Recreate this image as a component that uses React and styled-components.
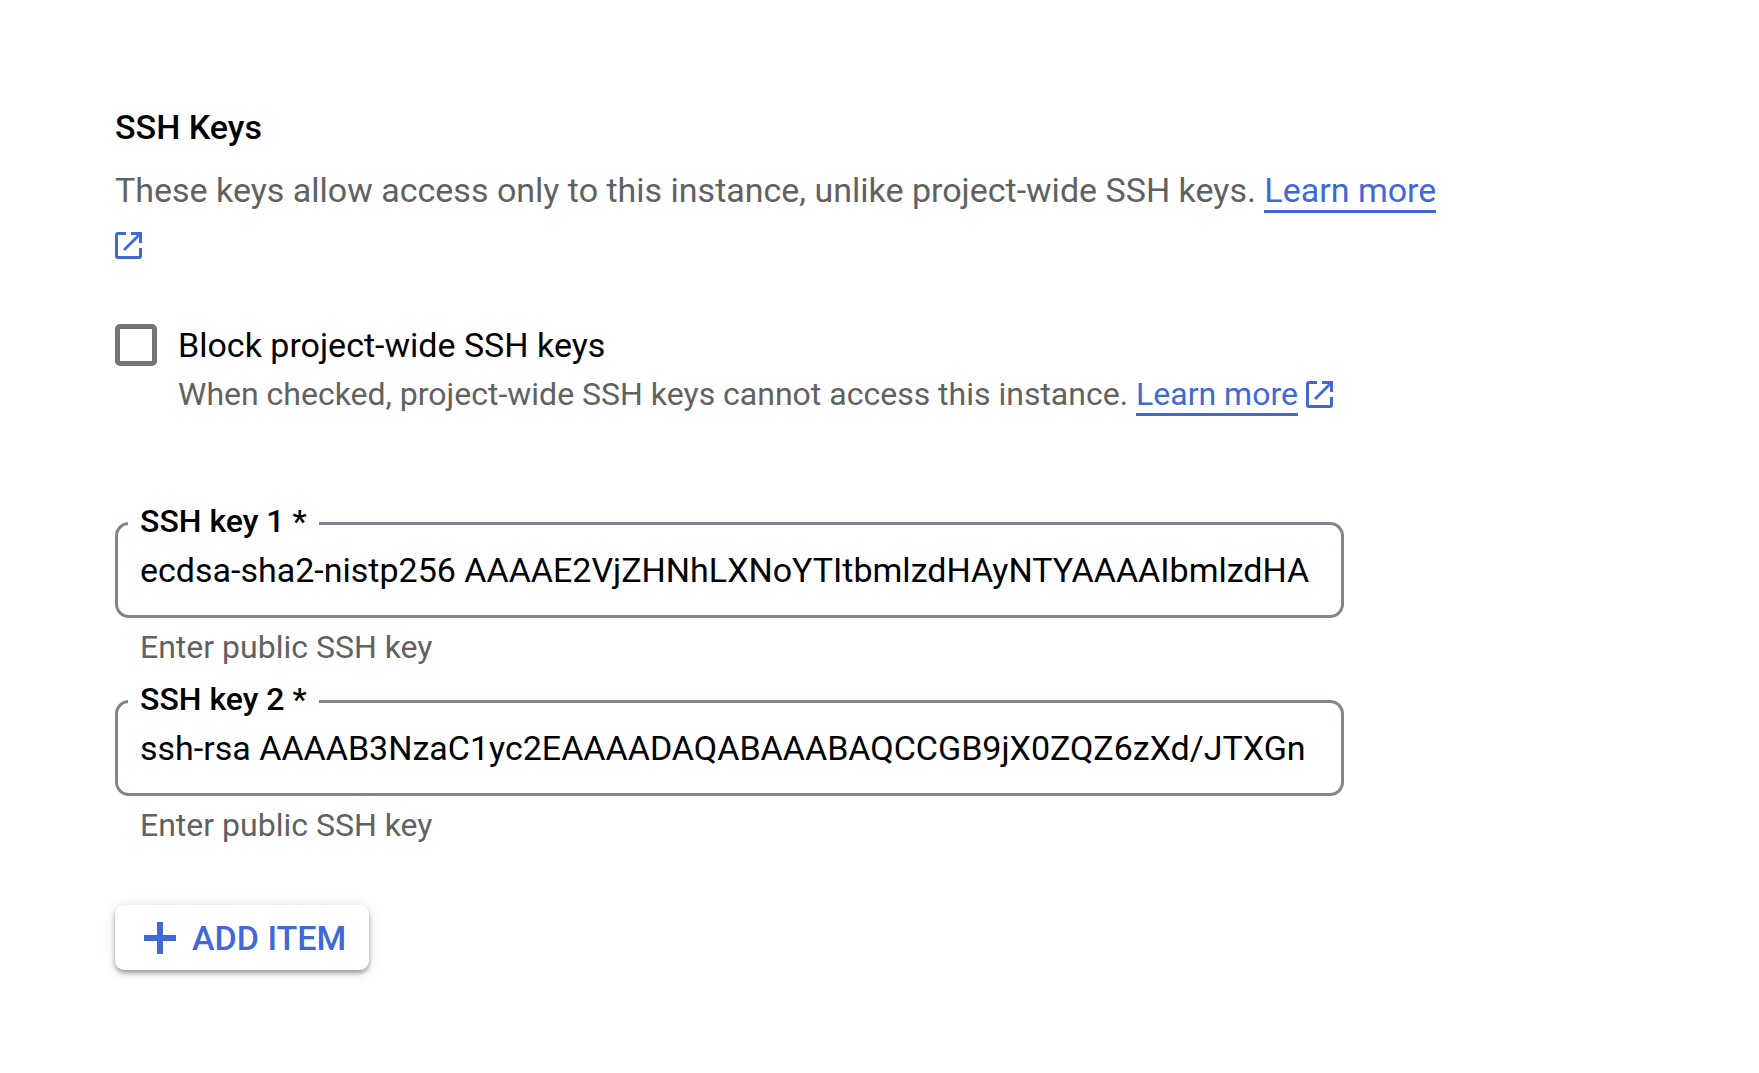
import React, { useState } from "react";
import styled, { createGlobalStyle } from "styled-components";

const GlobalStyle = createGlobalStyle`
  * { box-sizing: border-box; }
  body {
    margin: 0;
    background: #fff;
    color: #000;
    font-family: Roboto, "Liberation Sans", sans-serif;
  }
`;

const Page = styled.main`
  padding: 104px 64px 96px 115px;
`;

const Section = styled.section`
  max-width: 1356px;
`;

const Title = styled.h2`
  margin: 0;
  font-size: 34px;
  line-height: 46px;
  font-weight: 500;
`;

const Description = styled.p`
  margin: 13px 0 0;
  font-size: 34px;
  line-height: 54px;
  color: #616161;
`;

const Link = styled.a`
  color: #4068d6;
  text-decoration: none;
  border-bottom: 3px solid currentColor;
`;

const LinkIcon = styled.svg`
  width: 27px;
  height: 27px;
  fill: #4068d6;
  vertical-align: -3px;
`;

const CheckRow = styled.div`
  display: flex;
  gap: 21px;
  margin-top: 51px;
`;

const Checkbox = styled.input`
  appearance: none;
  flex: none;
  width: 42px;
  height: 42px;
  margin: 2px 0 0;
  border: 5px solid #757575;
  border-radius: 5px;
  background: #fff;

  &:checked {
    border-color: #4068d6;
    background: #4068d6;
  }
`;

const CheckText = styled.div`
  display: flex;
  flex-direction: column;
`;

const CheckLabel = styled.label`
  font-size: 34px;
  line-height: 46px;
`;

const Hint = styled.p`
  margin: 0;
  padding: ${(p) => (p.$inset ? "3px 0 0 25px" : "0")};
  font-size: 32px;
  line-height: 52px;
  color: #616161;
`;

const Fields = styled.div`
  display: flex;
  flex-direction: column;
  gap: 27px;
  max-width: 1229px;
  margin-top: 102px;
`;

const Outline = styled.div`
  position: relative;
  height: 96px;
  padding: 0 22px;
  border: 3px solid #80868b;
  border-radius: 14px;
`;

const FieldLabel = styled.label`
  position: absolute;
  left: 10px;
  top: -24px;
  padding: 0 12px;
  background: #fff;
  font-size: 32px;
  line-height: 40px;
  font-weight: 500;
`;

const FieldInput = styled.input`
  display: block;
  width: 100%;
  height: 90px;
  padding: 0;
  border: 0;
  outline: 0;
  background: transparent;
  color: #000;
  font-family: inherit;
  font-size: 34px;
`;

const AddButton = styled.button`
  display: inline-flex;
  align-items: center;
  gap: 16px;
  height: 65px;
  margin-top: 54px;
  padding: 0 23px 0 29px;
  border: 0;
  border-radius: 9px;
  background: #fff;
  box-shadow: 0 3px 4px rgba(0, 0, 0, 0.34), 0 2px 14px rgba(0, 0, 0, 0.12);
  color: #4068d6;
  font-family: inherit;
  font-size: 34px;
  font-weight: 500;
`;

const PlusIcon = styled.svg`
  width: 32px;
  height: 32px;
  fill: currentColor;
`;

const initialKeys = [
  "ecdsa-sha2-nistp256 AAAAE2VjZHNhLXNoYTItbmlzdHAyNTYAAAAIbmlzdHA",
  "ssh-rsa AAAAB3NzaC1yc2EAAAADAQABAAABAQCCGB9jX0ZQZ6zXd/JTXGn",
];

function ExternalIcon() {
  return (
    <LinkIcon viewBox="0 0 27 27" aria-hidden="true">
      <path d="M3 0H11V3H3V24H24V16H27V24a3 3 0 0 1-3 3H3a3 3 0 0 1-3-3V3a3 3 0 0 1 3-3Z" />
      <path d="M16 0H27V11H24V5L10 19L8 17L22 3H16Z" />
    </LinkIcon>
  );
}

function KeyField({ index, value, onChange }) {
  const id = `ssh-key-${index}`;
  return (
    <div>
      <Outline>
        <FieldLabel htmlFor={id}>SSH key {index} *</FieldLabel>
        <FieldInput
          id={id}
          type="text"
          required
          spellCheck={false}
          value={value}
          onChange={(e) => onChange(e.target.value)}
        />
      </Outline>
      <Hint $inset>Enter public SSH key</Hint>
    </div>
  );
}

export default function App() {
  const [keys, setKeys] = useState(initialKeys);
  const [blocked, setBlocked] = useState(false);
  const update = (i, v) => setKeys(keys.map((k, n) => (n === i ? v : k)));

  return (
    <Page>
      <GlobalStyle />
      <Section>
        <Title>SSH Keys</Title>
        <Description>
          These keys allow access only to this instance, unlike project-wide SSH keys.{" "}
          <Link href="#instance-keys">Learn more</Link> <ExternalIcon />
        </Description>
        <CheckRow>
          <Checkbox
            id="block-keys"
            type="checkbox"
            checked={blocked}
            onChange={(e) => setBlocked(e.target.checked)}
          />
          <CheckText>
            <CheckLabel htmlFor="block-keys">Block project-wide SSH keys</CheckLabel>
            <Hint>
              When checked, project-wide SSH keys cannot access this instance.{" "}
              <Link href="#block-keys">Learn more</Link> <ExternalIcon />
            </Hint>
          </CheckText>
        </CheckRow>
        <Fields>
          {keys.map((k, i) => (
            <KeyField key={i} index={i + 1} value={k} onChange={(v) => update(i, v)} />
          ))}
        </Fields>
        <AddButton type="button" onClick={() => setKeys([...keys, ""])}>
          <PlusIcon viewBox="0 0 32 32" aria-hidden="true">
            <path d="M13 0h6v13h13v6H19v13h-6V19H0v-6h13Z" />
          </PlusIcon>
          ADD ITEM
        </AddButton>
      </Section>
    </Page>
  );
}
